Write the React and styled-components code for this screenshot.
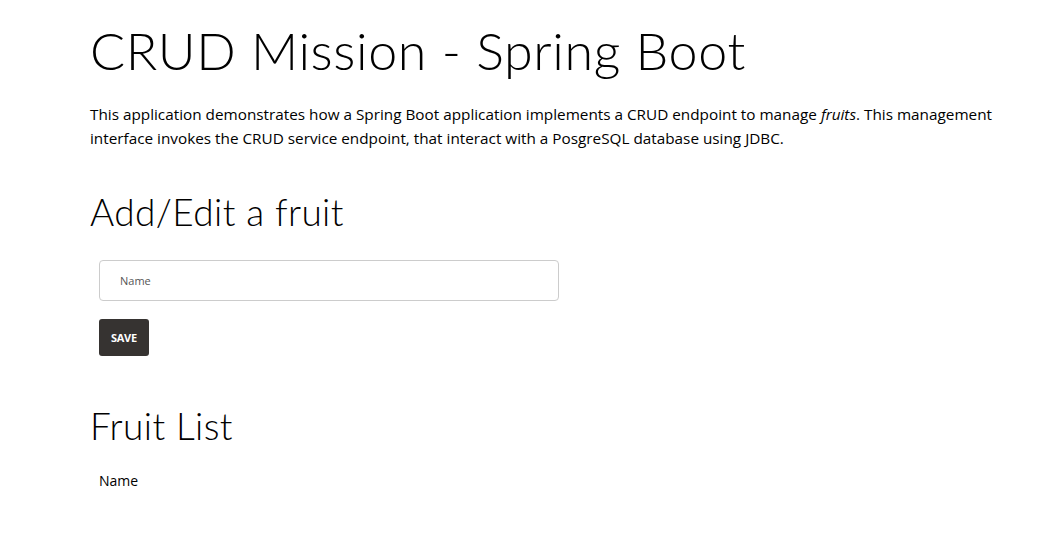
import styled, { createGlobalStyle } from "styled-components";

const Global = createGlobalStyle`
  body {
    margin: 0;
    background: #fff;
    font-family: "Open Sans", "Liberation Sans", sans-serif;
    color: #000;
  }
`;

const Page = styled.div`
  padding: 18px 40px 40px 90px;
`;

const Title = styled.h1`
  font-family: "Lato", "Noto Sans", sans-serif;
  font-weight: 300;
  font-size: 52px;
  line-height: 64px;
  letter-spacing: 0.6px;
  margin: 0 0 20px;
`;

const Intro = styled.p`
  font-size: 15.3px;
  line-height: 24px;
  margin: 0 0 38px;
  max-width: 930px;
`;

const Heading = styled.h2`
  font-family: "Lato", "Noto Sans", sans-serif;
  font-weight: 300;
  font-size: 37px;
  line-height: 48px;
  letter-spacing: 0.4px;
  margin: 0 0 ${(p) => p.$gap || 0}px;
`;

const Form = styled.form`
  display: flex;
  flex-direction: column;
  align-items: flex-start;
  gap: 18px;
  padding-left: 9px;
  margin-bottom: 46px;
`;

const Input = styled.input`
  box-sizing: border-box;
  width: 460px;
  height: 41px;
  padding: 0 20px;
  border: 1px solid #ccc;
  border-radius: 4px;
  font-family: inherit;
  font-size: 11px;
  color: #555;
  &::placeholder {
    color: #555;
  }
`;

const Button = styled.button`
  height: 37px;
  padding: 0 12px;
  border: none;
  border-radius: 3px;
  background: #363331;
  color: #fff;
  font-family: inherit;
  font-weight: 700;
  font-size: 11px;
  letter-spacing: -0.3px;
  cursor: pointer;
`;

const Table = styled.table`
  border-collapse: collapse;
  margin-left: 9px;
  th {
    text-align: left;
    font-weight: 400;
    font-size: 14px;
    padding: 0;
    color: #000;
  }
`;

export default function App() {
  return (
    <>
      <Global />
      <Page>
        <Title>CRUD Mission - Spring Boot</Title>
        <Intro>
          This application demonstrates how a Spring Boot application implements a CRUD endpoint to
          manage <em>fruits</em>. This management interface invokes the CRUD service endpoint, that
          interact with a PosgreSQL database using JDBC.
        </Intro>
        <Heading $gap={24}>Add/Edit a fruit</Heading>
        <Form onSubmit={(e) => e.preventDefault()}>
          <Input type="text" placeholder="Name" />
          <Button type="submit">SAVE</Button>
        </Form>
        <Heading $gap={21}>Fruit List</Heading>
        <Table>
          <thead>
            <tr>
              <th>Name</th>
            </tr>
          </thead>
        </Table>
      </Page>
    </>
  );
}
